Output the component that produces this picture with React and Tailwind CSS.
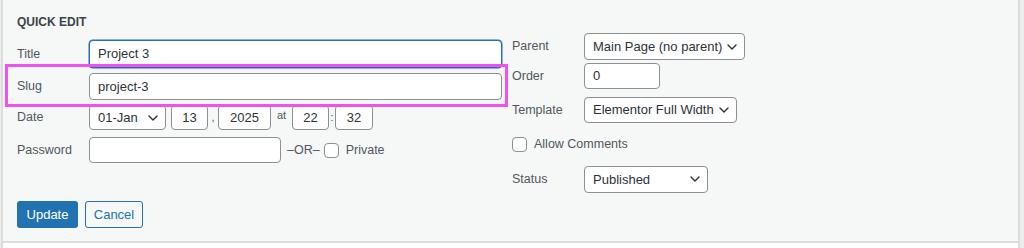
import React from 'react';

const font = { fontFamily: '"Liberation Sans", Arial, sans-serif' };

function Chevron({ className = '' }) {
    return (
        <svg width="10" height="6" viewBox="0 0 10 6" className={className} fill="none">
            <path d="M1 1l4 4 4-4" stroke="#2c3338" strokeWidth="1.4" strokeLinecap="round" strokeLinejoin="round" />
        </svg>
    );
}

function Select({ value, className = '' }) {
    return (
        <div className={`flex items-center justify-between bg-white border border-[#8c8f94] rounded-[4px] pl-2 pr-[7px] text-[13px] text-[#2c3338] ${className}`}>
            <span className="whitespace-nowrap">{value}</span>
            <Chevron className="ml-1 shrink-0" />
        </div>
    );
}

function Box({ children, className = '' }) {
    return (
        <div className={`flex items-center bg-white border border-[#8c8f94] rounded-[4px] text-[13px] text-[#2c3338] ${className}`}>
            {children}
        </div>
    );
}

function Checkbox() {
    return <div className="w-[15px] h-[15px] bg-white border border-[#8c8f94] rounded-[4px] shrink-0" />;
}

const labelCls = "w-[72px] shrink-0 text-[12.5px] text-[#50575e]";

export default function App() {
    return (
        <div className="relative w-[1024px] h-[248px] bg-white flex" style={font}>
            <div className="w-[1px] bg-[#ececec]" />
            <div className="w-[2px] bg-[#dcdcde]" />

            <div className="w-[1015px] h-[243px] bg-[#f6f7f7] border-b-2 border-[#dcdcde] flex">
                {/* left column */}
                <div className="w-[499px] pl-[14px] pt-[14px]">
                    <div className="text-[12px] leading-[16px] font-bold text-[#3c434a] uppercase">Quick Edit</div>

                    <div className="mt-[10px] flex items-center">
                        <span className={labelCls}>Title</span>
                        <Box className="w-[413px] h-[28px] px-2 border-[#2271b1] shadow-[0_0_0_0.5px_#2271b1]">Project 3</Box>
                    </div>

                    <div className="mt-[5px] flex items-center">
                        <span className={labelCls}>Slug</span>
                        <Box className="w-[413px] h-[27px] px-2">project-3</Box>
                    </div>

                    <div className="mt-[5px] flex items-center">
                        <span className={labelCls}>Date</span>
                        <Select value="01-Jan" className="w-[77px] h-[25px]" />
                        <Box className="ml-[5px] w-[37px] h-[25px] justify-center">13</Box>
                        <span className="w-[10px] text-center text-[11px] text-[#50575e]">,</span>
                        <Box className="w-[53px] h-[25px] justify-center">2025</Box>
                        <span className="w-[21px] text-center text-[11px] text-[#50575e] -mt-[5px]">at</span>
                        <Box className="w-[37px] h-[25px] justify-center">22</Box>
                        <span className="w-[6px] text-center text-[11px] text-[#50575e]">:</span>
                        <Box className="w-[38px] h-[25px] justify-center">32</Box>
                    </div>

                    <div className="mt-[7px] flex items-center">
                        <span className={labelCls}>Password</span>
                        <Box className="w-[192px] h-[26px]" />
                        <span className="ml-[6px] text-[12.5px] text-[#50575e]">–OR–</span>
                        <div className="ml-[4px]"><Checkbox /></div>
                        <span className="ml-[7px] text-[12.5px] text-[#50575e]">Private</span>
                    </div>

                    <div className="mt-[38px] flex items-center">
                        <button className="w-[61px] h-[27px] bg-[#2271b1] text-white text-[13px] rounded-[3px]">Update</button>
                        <button className="ml-[7px] w-[58px] h-[27px] border border-[#2271b1] text-[#2271b1] text-[13px] rounded-[3px] bg-[#f6f7f7]">Cancel</button>
                    </div>
                </div>

                {/* right column */}
                <div className="pl-[10px] pt-[33px]">
                    <div className="flex items-center">
                        <span className={labelCls}>Parent</span>
                        <Select value="Main Page (no parent)" className="w-[161px] h-[27px]" />
                    </div>
                    <div className="mt-[3px] flex items-center">
                        <span className={labelCls}>Order</span>
                        <Box className="w-[76px] h-[26px] px-2">0</Box>
                    </div>
                    <div className="mt-[8px] flex items-center">
                        <span className={labelCls}>Template</span>
                        <Select value="Elementor Full Width" className="w-[153px] h-[26px]" />
                    </div>
                    <div className="mt-[12px] flex items-center">
                        <Checkbox />
                        <span className="ml-[7px] text-[12.5px] text-[#50575e]">Allow Comments</span>
                    </div>
                    <div className="mt-[12px] flex items-center">
                        <span className={labelCls}>Status</span>
                        <Select value="Published" className="w-[124px] h-[27px]" />
                    </div>
                </div>
            </div>

            <div className="w-[2px] bg-[#dcdcde]" />
            <div className="flex-1 bg-[#ececec]" />

            {/* highlight annotation */}
            <div className="absolute left-[5px] top-[64px] w-[503px] h-[43px] border-[3px] border-[#f052f2] pointer-events-none" />
        </div>
    );
}
